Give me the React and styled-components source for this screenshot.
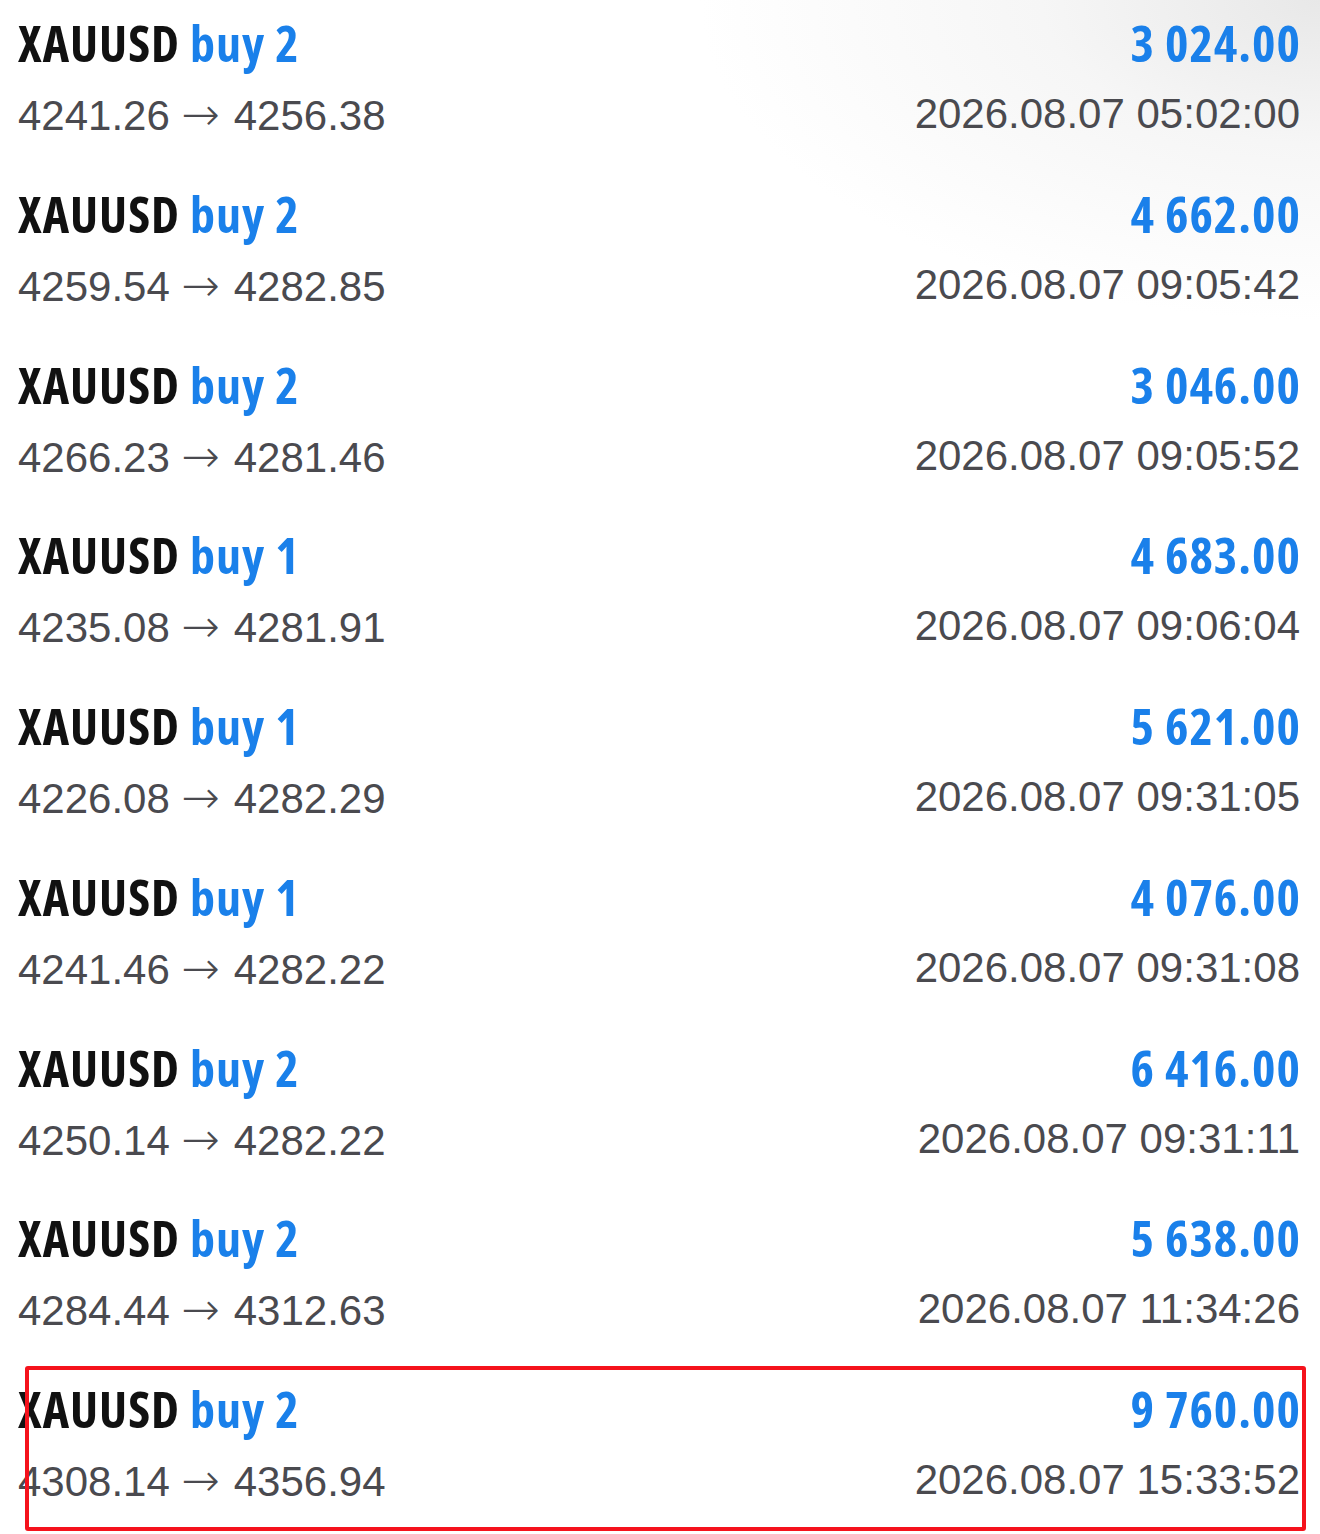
import styled, { createGlobalStyle } from "styled-components";

const GlobalStyle = createGlobalStyle`
  html, body {
    margin: 0;
    padding: 0;
    background: #fff;
  }
`;

const trades = [
  { lots: 2, open: "4241.26", close: "4256.38", profit: "3 024.00", time: "2026.08.07 05:02:00" },
  { lots: 2, open: "4259.54", close: "4282.85", profit: "4 662.00", time: "2026.08.07 09:05:42" },
  { lots: 2, open: "4266.23", close: "4281.46", profit: "3 046.00", time: "2026.08.07 09:05:52" },
  { lots: 1, open: "4235.08", close: "4281.91", profit: "4 683.00", time: "2026.08.07 09:06:04" },
  { lots: 1, open: "4226.08", close: "4282.29", profit: "5 621.00", time: "2026.08.07 09:31:05" },
  { lots: 1, open: "4241.46", close: "4282.22", profit: "4 076.00", time: "2026.08.07 09:31:08" },
  { lots: 2, open: "4250.14", close: "4282.22", profit: "6 416.00", time: "2026.08.07 09:31:11" },
  { lots: 2, open: "4284.44", close: "4312.63", profit: "5 638.00", time: "2026.08.07 11:34:26" },
  { lots: 2, open: "4308.14", close: "4356.94", profit: "9 760.00", time: "2026.08.07 15:33:52", marked: true },
];

const Page = styled.main`
  width: 1320px;
  min-height: 1534px;
  box-sizing: border-box;
  padding: 0 20px 0 18px;
  background: radial-gradient(ellipse 620px 320px at 100% 0, #e8e8e8 0%, #f6f6f6 45%, #fff 100%);
  overflow: hidden;
`;

const Row = styled.div`
  position: relative;
  height: 170.75px;
  box-sizing: border-box;
  padding-top: 7px;
  display: grid;
  grid-template-columns: 1fr auto;
  grid-template-rows: 73px 68px;
`;

const Title = styled.div`
  font-family: "Open Sans", "Liberation Sans", sans-serif;
  font-weight: 700;
  font-stretch: 75%;
  font-size: 50px;
  letter-spacing: 1px;
  line-height: 73px;
  color: #111;
  white-space: nowrap;
`;

const Side = styled.span`
  color: #1a80ea;
`;

const Profit = styled(Title)`
  color: #1a80ea;
  text-align: right;
  margin-right: -1px;
`;

const Sub = styled.div`
  font-family: "Liberation Sans", Arial, sans-serif;
  font-size: 42px;
  line-height: 68px;
  color: #4a4a4f;
  white-space: nowrap;
  text-align: ${(p) => (p.right ? "right" : "left")};
`;

const Arrow = styled.span`
  font-family: "DejaVu Sans", sans-serif;
  font-weight: 200;
  font-size: 46px;
  margin-right: 2px;
`;

const Marker = styled.div`
  position: absolute;
  left: 7px;
  right: -6px;
  top: 0;
  bottom: 6px;
  border: 4px solid #f5121c;
  border-radius: 3px;
  pointer-events: none;
`;

export default function App() {
  return (
    <>
      <GlobalStyle />
      <Page>
        {trades.map((t, i) => (
          <Row key={i}>
            <Title>
              XAUUSD <Side>buy {t.lots}</Side>
            </Title>
            <Profit>{t.profit}</Profit>
            <Sub>
              {t.open} <Arrow>→</Arrow> {t.close}
            </Sub>
            <Sub right>{t.time}</Sub>
            {t.marked && <Marker />}
          </Row>
        ))}
      </Page>
    </>
  );
}
